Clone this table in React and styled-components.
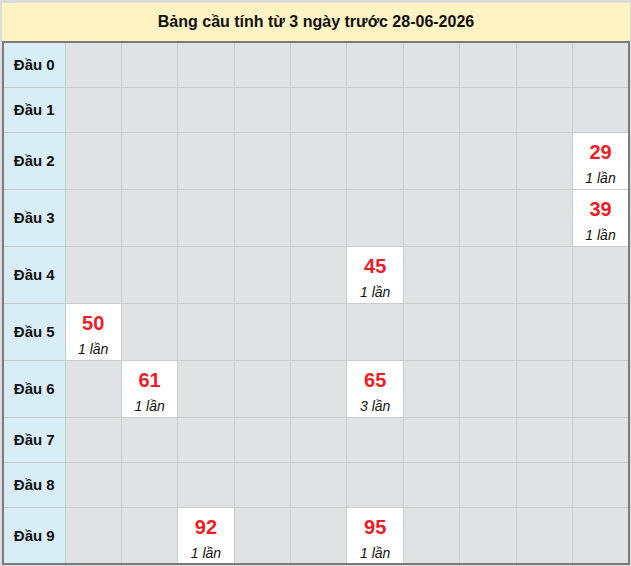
import React from 'react'
import styled, { createGlobalStyle } from 'styled-components'

const GlobalStyle = createGlobalStyle`
  html, body {
    margin: 0;
    padding: 0;
    background: #dcdcdc;
  }
  body {
    font-family: "Liberation Sans", Arial, sans-serif;
  }
`

const Page = styled.div`
  width: 631px;
  height: 566px;
  box-sizing: border-box;
  padding: 3px 1px 0 2px;
  background: #dcdcdc;
  overflow: hidden;
`

const Title = styled.div`
  height: 38px;
  background: #fff2c3;
  color: #111;
  font-size: 16px;
  font-weight: bold;
  display: flex;
  align-items: center;
  justify-content: center;
  padding-bottom: 1px;
  box-sizing: border-box;
`

const Table = styled.table`
  width: 628px;
  border-collapse: collapse;
  table-layout: fixed;
  border: 2px solid #7b7b7b;
`

const Row = styled.tr`
  height: ${p => (p.$tall ? '57px' : '45px')};
`

const Label = styled.td`
  width: 61px;
  background: #d9edf7;
  border: 1px solid #c9c9c9;
  color: #111;
  font-size: 15px;
  font-weight: bold;
  text-align: center;
  vertical-align: middle;
  padding: 0;
`

const Cell = styled.td`
  background: ${p => (p.$hit ? '#ffffff' : '#e1e2e4')};
  border: 1px solid #cbcbcb;
  text-align: center;
  vertical-align: top;
  padding: 0;
`

const Hit = styled.div`
  display: flex;
  flex-direction: column;
  align-items: center;
  padding-top: 7px;
`

const Num = styled.span`
  color: #ee1d25;
  font-size: 20px;
  font-weight: bold;
  line-height: 24px;
`

const Times = styled.span`
  color: #111;
  font-size: 14px;
  font-style: italic;
  line-height: 20px;
  margin-top: 4px;
`

const hits = {
  2: { 9: ['29', 1] },
  3: { 9: ['39', 1] },
  4: { 5: ['45', 1] },
  5: { 0: ['50', 1] },
  6: { 1: ['61', 1], 5: ['65', 3] },
  9: { 2: ['92', 1], 5: ['95', 1] },
}

const heads = [0, 1, 2, 3, 4, 5, 6, 7, 8, 9]

export default function App() {
  return (
    <Page>
      <GlobalStyle />
      <Title>Bảng cầu tính từ 3 ngày trước 28-06-2026</Title>
      <Table>
        <colgroup>
          <col style={{ width: 62 }} />
          {heads.map(i => <col key={i} />)}
        </colgroup>
        <tbody>
          {heads.map(d => {
            const row = hits[d] || {}
            return (
              <Row key={d} $tall={!!hits[d]}>
                <Label>Đầu {d}</Label>
                {heads.map(c => {
                  const h = row[c]
                  return (
                    <Cell key={c} $hit={!!h}>
                      {h && (
                        <Hit>
                          <Num>{h[0]}</Num>
                          <Times>{h[1]} lần</Times>
                        </Hit>
                      )}
                    </Cell>
                  )
                })}
              </Row>
            )
          })}
        </tbody>
      </Table>
    </Page>
  )
}
